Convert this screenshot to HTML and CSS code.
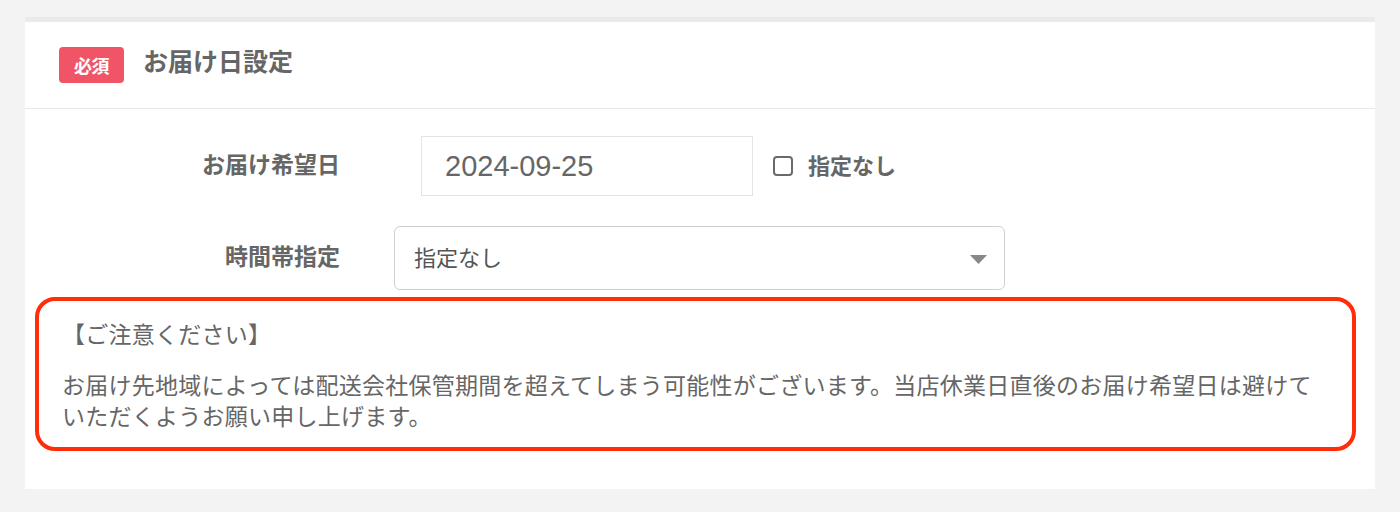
FILE: index.html
```html
<!DOCTYPE html>
<html lang="ja">
<head>
<meta charset="utf-8">
<title>お届け日設定</title>
<link rel="stylesheet" href="styles.css">
</head>
<body>
<section class="card">
  <header class="card-header">
    <span class="badge">必須</span>
    <h2 class="title">お届け日設定</h2>
  </header>
  <div class="card-body">
    <div class="form-grid">
      <div class="label">お届け希望日</div>
      <div class="field field-date">
        <div class="date-input">2024-09-25</div>
        <span class="checkbox" aria-hidden="true"></span>
        <span class="check-label">指定なし</span>
      </div>
      <div class="label">時間帯指定</div>
      <div class="field">
        <div class="select">
          <span class="select-value">指定なし</span>
          <svg class="select-arrow" width="17" height="9" viewBox="0 0 17 9"><path d="M0 0 H17 L8.5 9 Z" fill="#888"/></svg>
        </div>
      </div>
    </div>
    <div class="notice">
      <p class="notice-title">【ご注意ください】</p>
      <p class="notice-text">お届け先地域によっては配送会社保管期間を超えてしまう可能性がございます。当店休業日直後のお届け希望日は避けていただくようお願い申し上げます。</p>
    </div>
  </div>
</section>
</body>
</html>
```

FILE: styles.css
```css
html, body {
  margin: 0;
  padding: 0;
}
body {
  background: #f3f3f3;
  padding: 17px 25px 0;
  font-family: "Noto Sans CJK JP", "Noto Sans", sans-serif;
  color: #666;
}
.card {
  background: #fff;
  border-top: 5px solid #e9eaec;
  padding-bottom: 38px;
}
.card-header {
  height: 86px;
  display: flex;
  align-items: center;
  gap: 19px;
  padding-left: 34px;
  border-bottom: 1px solid #e8e8e8;
}
.badge {
  width: 65px;
  height: 36px;
  box-sizing: border-box;
  background: #ef5567;
  border-radius: 4px;
  color: #fff;
  font-weight: 700;
  font-size: 18px;
  line-height: 36px;
  text-align: center;
  letter-spacing: -0.5px;
}
.title {
  margin: 0 0 11px;
  font-size: 25px;
  font-weight: 700;
  line-height: 1.2;
  color: #666;
}
.card-body {
  padding-top: 27px;
}
.form-grid {
  display: grid;
  grid-template-columns: 315px 1fr;
  column-gap: 54px;
  row-gap: 30px;
  align-items: center;
}
.label {
  text-align: right;
  font-size: 23px;
  font-weight: 700;
  color: #666;
  line-height: 1.2;
  padding-bottom: 4px;
}
.field {
  display: flex;
  align-items: center;
}
.field-date {
  padding-left: 27px;
}
.date-input {
  width: 332px;
  height: 60px;
  box-sizing: border-box;
  border: 1px solid #e3e3e3;
  padding-left: 23px;
  display: flex;
  align-items: center;
  font-family: "Liberation Sans", Arial, sans-serif;
  font-size: 29px;
  color: #666;
}
.checkbox {
  width: 20px;
  height: 20px;
  box-sizing: border-box;
  border: 2px solid #6a6a6a;
  border-radius: 4px;
  margin-left: 20px;
}
.check-label {
  margin-left: 15px;
  font-size: 22px;
  font-weight: 700;
  color: #666;
  line-height: 1.2;
  padding-bottom: 3px;
}
.select {
  width: 611px;
  height: 64px;
  box-sizing: border-box;
  border: 1px solid #cfcfcf;
  border-radius: 6px;
  display: flex;
  align-items: center;
  justify-content: space-between;
  padding: 0 17px 0 19px;
}
.select-value {
  font-size: 22px;
  color: #555;
  line-height: 1.2;
  padding-bottom: 4px;
}
.select-arrow {
  display: block;
  margin-top: 2px;
}
.notice {
  margin: 7px 19px 0 10px;
  border: 4px solid #ff2d0a;
  border-radius: 20px;
  padding: 17px 23px 16px;
}
.notice p {
  margin: 0;
  font-size: 23px;
  line-height: 31px;
  color: #666;
  letter-spacing: 0.25px;
}
.notice-text {
  margin-top: 20px !important;
}
```
